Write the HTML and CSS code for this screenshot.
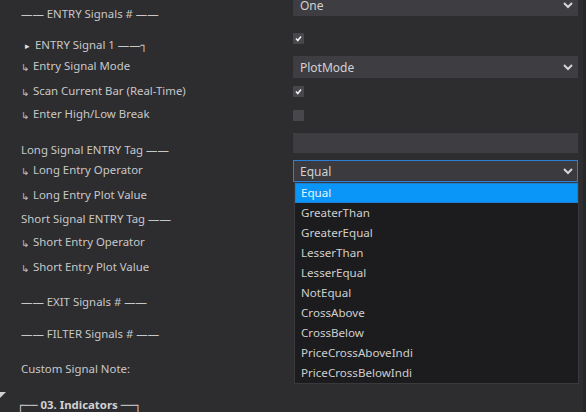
FILE: index.html
```html
<!DOCTYPE html>
<html>
<head>
<meta charset="utf-8">
<link rel="stylesheet" href="styles.css">
</head>
<body>
<div class="page">
  <div class="grid">
    <div class="label hdr-a">—— ENTRY Signals # ——</div>
    <div class="ctrl"><div class="dd"><span>One</span><svg class="chev" width="10" height="7" viewBox="0 0 10 7"><polyline points="1,1 5,5 9,1" fill="none" stroke="#d6d6d6" stroke-width="2"/></svg></div></div>

    <div class="label hdr sub"><span class="tri">▸</span>ENTRY Signal 1 ——┐</div>
    <div class="ctrl"><div class="cb"><svg width="11" height="11" viewBox="0 0 11 11"><polyline points="3,5.5 4.8,7.5 8,3.5" fill="none" stroke="#f0f0f0" stroke-width="1.6"/></svg></div></div>

    <div class="label"><span class="arr">↳</span>Entry Signal Mode</div>
    <div class="ctrl"><div class="dd"><span>PlotMode</span><svg class="chev" width="10" height="7" viewBox="0 0 10 7"><polyline points="1,1 5,5 9,1" fill="none" stroke="#d6d6d6" stroke-width="2"/></svg></div></div>

    <div class="label"><span class="arr">↳</span>Scan Current Bar (Real-Time)</div>
    <div class="ctrl"><div class="cb"><svg width="11" height="11" viewBox="0 0 11 11"><polyline points="3,5.5 4.8,7.5 8,3.5" fill="none" stroke="#f0f0f0" stroke-width="1.6"/></svg></div></div>

    <div class="label"><span class="arr">↳</span>Enter High/Low Break</div>
    <div class="ctrl"><div class="cb"></div></div>

    <div class="label hdr">Long Signal ENTRY Tag ——</div>
    <div class="ctrl"><div class="tb"></div></div>

    <div class="label"><span class="arr">↳</span>Long Entry Operator</div>
    <div class="ctrl">
      <div class="dd open"><span>Equal</span><svg class="chev" width="10" height="7" viewBox="0 0 10 7"><polyline points="1,1 5,5 9,1" fill="none" stroke="#d6d6d6" stroke-width="2"/></svg>
        <ul class="list">
          <li class="sel">Equal</li>
          <li>GreaterThan</li>
          <li>GreaterEqual</li>
          <li>LesserThan</li>
          <li>LesserEqual</li>
          <li>NotEqual</li>
          <li>CrossAbove</li>
          <li>CrossBelow</li>
          <li>PriceCrossAboveIndi</li>
          <li>PriceCrossBelowIndi</li>
        </ul>
      </div>
    </div>

    <div class="label"><span class="arr">↳</span>Long Entry Plot Value</div>
    <div class="ctrl"></div>

    <div class="label">Short Signal ENTRY Tag ——</div>
    <div class="ctrl"></div>

    <div class="label"><span class="arr">↳</span>Short Entry Operator</div>
    <div class="ctrl"></div>

    <div class="label"><span class="arr">↳</span>Short Entry Plot Value</div>
    <div class="ctrl"></div>

    <div class="label">—— EXIT Signals # ——</div>
    <div class="ctrl"></div>

    <div class="label">—— FILTER Signals # ——</div>
    <div class="ctrl"></div>

    <div class="label">Custom Signal Note:</div>
    <div class="ctrl"></div>

    <div class="cat"><svg class="cat-tri" width="7" height="6" viewBox="0 0 7 6"><polygon points="0,0 7,0 1,6" fill="#d0d0d0"/></svg><span class="cat-text">┌── 03. Indicators ──┐</span></div>
  </div>
</div>
</body>
</html>
```

FILE: styles.css
```css
html, body {
  margin: 0;
  padding: 0;
  background: #2d2d30;
}
body {
  width: 586px;
  height: 412px;
  overflow: hidden;
  font-family: "Noto Sans", "DejaVu Sans", sans-serif;
  font-size: 11.4px;
  color: #c8c8c8;
}
.page {
  width: 583px;
  height: 412px;
  border-right: 3px solid #262629;
  overflow: hidden;
}
.grid {
  display: grid;
  grid-template-columns: 293px 285px;
  grid-template-rows: 36px 30px 28px 21px 26px 30px 26px 24px 22px 26px 24px 44px 20px 50px 20px;
  margin-top: -13px;
  align-items: center;
}
.label {
  padding-left: 21px;
  white-space: nowrap;
  line-height: 16px;
}
.label.sub {
  padding-left: 25px;
}
.hdr {
  padding-top: 14px;
}
.hdr-a {
  padding-top: 18px;
}
.arr {
  display: inline-block;
  width: 12px;
  font-size: 10px;
  font-family: "DejaVu Sans", sans-serif;
  color: #bdbdbd;
  vertical-align: -1px;
}
.tri {
  display: inline-block;
  width: 10px;
  font-size: 9px;
  color: #e0e0e0;
  font-family: "DejaVu Sans", sans-serif;
}
.ctrl {
  display: flex;
  align-items: center;
}
.dd {
  position: relative;
  box-sizing: border-box;
  width: 285px;
  height: 22px;
  background: #3d3d42;
  display: flex;
  align-items: center;
  justify-content: space-between;
  padding: 0 5px 0 7px;
  color: #d2d2d2;
  font-size: 12px;
}
.dd.open {
  border: 1px solid #2c7fd8;
  padding-left: 6px;
  padding-right: 4px;
  background: #3a3a3f;
}
.chev {
  display: block;
}
.cb {
  width: 11px;
  height: 11px;
  background: #47474c;
  border-radius: 1px;
}
.cb svg {
  display: block;
}
.tb {
  width: 285px;
  height: 20px;
  background: #3d3d42;
}
.list {
  position: absolute;
  top: 21px;
  left: 0;
  width: 285px;
  box-sizing: border-box;
  margin: 0;
  padding: 0;
  list-style: none;
  background: #1c1c1e;
  border: 1px solid #3a3a3e;
  z-index: 5;
  font-size: 11.6px;
}
.list li {
  height: 20px;
  line-height: 20px;
  padding-left: 6px;
  color: #cfcfcf;
}
.list li.sel {
  background: #0a96f8;
  color: #e8f4ff;
  box-shadow: inset 0 0 0 1px #1c7fd0;
}
.cat {
  grid-column: 1 / 3;
  display: flex;
  align-items: center;
  position: relative;
  height: 20px;
}
.cat-tri {
  position: absolute;
  left: -1px;
  top: -2px;
}
.cat-text {
  padding-left: 17px;
  font-weight: bold;
  color: #d2d2d2;
  white-space: nowrap;
}
```
